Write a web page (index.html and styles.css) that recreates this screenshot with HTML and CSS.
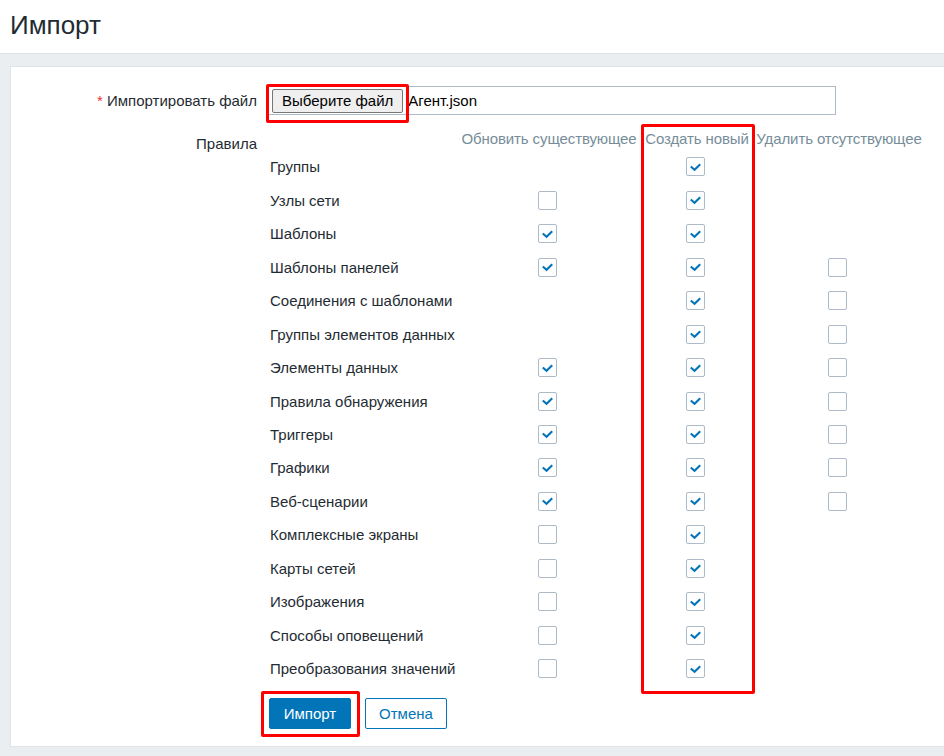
FILE: index.html
```html
<!DOCTYPE html>
<html lang="ru">
<head>
<meta charset="utf-8">
<title>Импорт</title>
<link rel="stylesheet" href="styles.css">
</head>
<body>
<header class="page-header">
  <h1 class="page-title">Импорт</h1>
</header>
<main class="content">
  <section class="panel">
    <div class="form-row file-row">
      <div class="form-label"><span class="req">*</span> Импортировать файл</div>
      <div class="form-field">
        <div class="file-input">
          <span class="file-btn">Выберите файл</span>
          <span class="file-name">Агент.json</span>
        </div>
      </div>
    </div>
    <div class="form-row rules-row">
      <div class="form-label rules-label">Правила</div>
      <div class="form-field">
        <div class="rules" id="rules">
          <div class="rh"></div>
          <div class="rh">Обновить существующее</div>
          <div class="rh">Создать новый</div>
          <div class="rh">Удалить отсутствующее</div>
        </div>
      </div>
    </div>
    <div class="form-row buttons-row">
      <div class="form-label"></div>
      <div class="form-field buttons">
        <button class="btn btn-primary">Импорт</button>
        <button class="btn btn-alt">Отмена</button>
      </div>
    </div>
    <div class="mark mark-file"></div>
    <div class="mark mark-col"></div>
    <div class="mark mark-btn"></div>
  </section>
</main>
<script>
  var rows = [
    ["Группы", null, 1, null],
    ["Узлы сети", 0, 1, null],
    ["Шаблоны", 1, 1, null],
    ["Шаблоны панелей", 1, 1, 0],
    ["Соединения с шаблонами", null, 1, 0],
    ["Группы элементов данных", null, 1, 0],
    ["Элементы данных", 1, 1, 0],
    ["Правила обнаружения", 1, 1, 0],
    ["Триггеры", 1, 1, 0],
    ["Графики", 1, 1, 0],
    ["Веб-сценарии", 1, 1, 0],
    ["Комплексные экраны", 0, 1, null],
    ["Карты сетей", 0, 1, null],
    ["Изображения", 0, 1, null],
    ["Способы оповещений", 0, 1, null],
    ["Преобразования значений", 0, 1, null]
  ];
  var check = '<svg viewBox="0 0 18 18" width="18" height="18"><polyline points="4,8.5 8,12 14,6" fill="none" stroke="#0275b8" stroke-width="2.2"/></svg>';
  var html = "";
  rows.forEach(function (r) {
    html += '<div class="rc name">' + r[0] + '</div>';
    for (var i = 1; i < 4; i++) {
      html += '<div class="rc cb">';
      if (r[i] !== null) html += '<span class="checkbox">' + (r[i] ? check : '') + '</span>';
      html += '</div>';
    }
  });
  document.getElementById("rules").insertAdjacentHTML("beforeend", html);
</script>
</body>
</html>
```

FILE: styles.css
```css
* { box-sizing: border-box; }
html, body {
  margin: 0;
  padding: 0;
}
body {
  font-family: "Liberation Sans", Arial, sans-serif;
  font-size: 15px;
  color: #1f2c33;
  background: #ebeef0;
  width: 944px;
  height: 756px;
  overflow: hidden;
}
.page-header {
  background: #ffffff;
  height: 54px;
  border-bottom: 1px solid #dfe4e7;
  padding: 9px 10px 0;
}
.page-title {
  margin: 0;
  font-weight: normal;
  font-size: 26px;
  line-height: 32px;
  color: #1f2c33;
}
.content {
  padding: 12px 0 0 10px;
}
.panel {
  position: relative;
  background: #ffffff;
  border: 1px solid #dfe4e7;
  border-right: none;
  height: 681px;
  padding: 19px 0 0 0;
}
.form-row {
  display: flex;
  align-items: flex-start;
}
.form-label {
  width: 246px;
  flex: none;
  text-align: right;
}
.form-field {
  margin-left: 11px;
}
.file-row .form-label {
  padding-top: 6px;
}
.req { color: #e33734; }
.file-input {
  width: 568px;
  height: 29px;
  border: 1px solid #acbbc7;
  display: flex;
  align-items: center;
  padding-left: 3px;
}
.file-btn {
  display: inline-block;
  height: 24px;
  line-height: 22px;
  padding: 0 9px;
  background: #efefef;
  border: 1px solid #767676;
  border-radius: 2px;
  color: #000;
  font-size: 15px;
}
.file-name {
  margin-left: 5px;
  color: #000;
}
.rules-row {
  margin-top: 13px;
}
.rules-label {
  padding-top: 7px;
}
.rules {
  display: grid;
  grid-template-columns: 190px 182px 114px 170px;
  grid-auto-rows: 33.47px;
  grid-template-rows: 22px;
}
.rh {
  color: #768d99;
  text-align: center;
  white-space: nowrap;
  line-height: 22px;
  letter-spacing: -0.1px;
}
.rc {
  display: flex;
  align-items: center;
}
.rc.name { padding-left: 2px; }
.rc.cb { justify-content: center; padding-right: 4px; }
.checkbox {
  width: 19px;
  height: 19px;
  border: 1px solid #acbbc7;
  border-radius: 2px;
  background: #fff;
  display: flex;
  align-items: center;
  justify-content: center;
}
.checkbox svg { display: block; }
.buttons-row {
  margin-top: 12px;
}
.buttons {
  display: flex;
  gap: 14px;
  margin-left: 12px;
}
.btn {
  font-family: inherit;
  font-size: 15px;
  height: 31px;
  width: 82px;
  border-radius: 2px;
  cursor: pointer;
}
.btn-primary {
  background: #0275b8;
  border: 1px solid #0275b8;
  color: #ffffff;
}
.btn-alt {
  background: #ffffff;
  border: 1px solid #0275b8;
  color: #0275b8;
}
.mark {
  position: absolute;
  border: 3px solid #ff0000;
  border-radius: 2px;
  pointer-events: none;
}
.mark-file { left: 255px; top: 17px; width: 143px; height: 39px; }
.mark-col { left: 630px; top: 57px; width: 114px; height: 570px; }
.mark-btn { left: 250px; top: 624px; width: 99px; height: 46px; }
```
